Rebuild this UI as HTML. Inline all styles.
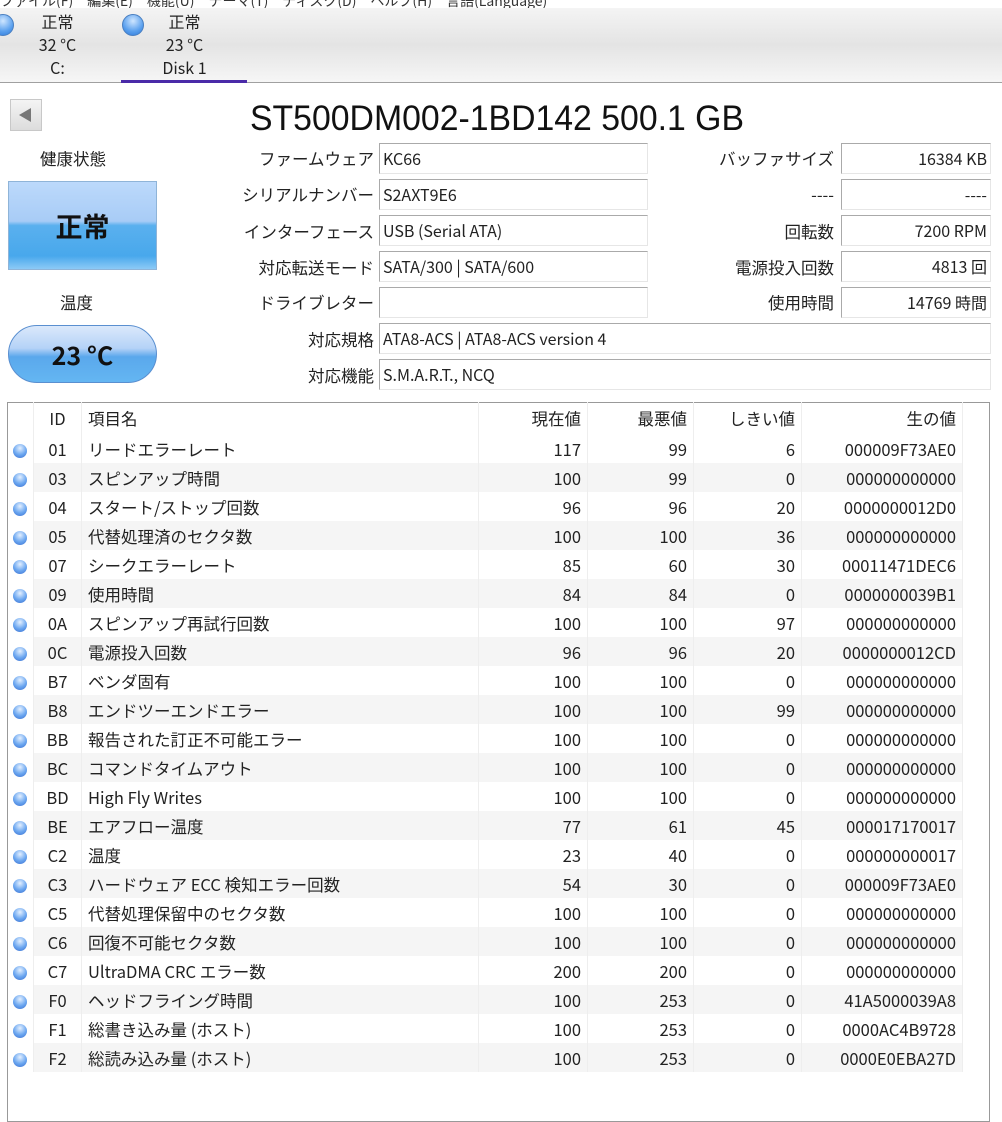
<!DOCTYPE html>
<html><head><meta charset="utf-8">
<style>
*{margin:0;padding:0;box-sizing:border-box}
body{width:1002px;height:1093px;background:#fff;position:relative;overflow:hidden;font-family:"Noto Sans CJK JP","Liberation Sans",sans-serif;font-size:16.5px;color:#222;line-height:22px}
.a{position:absolute;white-space:nowrap}
.menu{top:-10px;left:0;font-size:14px;color:#333}
.tabs{position:absolute;left:0;top:8px;width:1002px;height:75px;background:linear-gradient(#f4f4f4,#e4e4e4 50%,#f6f6f6);border-bottom:1px solid #a0a0a0}
.tab{position:absolute;top:2px;text-align:center;font-size:16px;line-height:23px;color:#222}
.ball{position:absolute;width:22px;height:22px;border-radius:50%;background:radial-gradient(circle at 50% 30%,#cfe6ff,#5aa0ee 60%,#2d78d8);border:1px solid #4a7fc0}
.lbl{text-align:right}
.box{position:absolute;height:31px;border:1px solid #aaa;border-right-color:#e6e6e6;border-bottom-color:#e6e6e6;background:#fff;padding:0 3px;line-height:29px;font-size:16px}
.r{text-align:right}
table{position:absolute;left:7px;top:402px;border-collapse:collapse;font-size:16.5px}
.frame{position:absolute;left:7px;top:402px;width:983px;height:720px;border:1px solid #999}
td{height:29px;padding:0 6px;border-right:1px solid #eee;white-space:nowrap;line-height:20px;vertical-align:middle}
tr.s td:not(:first-child){background:#f5f5f5}
td.n{text-align:right}
.dot{display:inline-block;width:14px;height:14px;border-radius:50%;background:radial-gradient(circle at 50% 30%,#e4f0ff,#6aa6f0 55%,#3a6fd0);vertical-align:middle}
</style></head><body>
<div class="a menu">ファイル(F)　編集(E)　機能(U)　テーマ(T)　ディスク(D)　ヘルプ(H)　言語(Language)</div>
<div class="tabs">
<div class="ball" style="left:-8px;top:6px"></div>
<div class="tab" style="left:20px;width:75px">正常<br>32 °C<br>C:</div>
<div class="ball" style="left:122px;top:6px"></div>
<div class="tab" style="left:147px;width:75px">正常<br>23 °C<br>Disk 1</div>
<div style="position:absolute;left:121px;top:72px;width:126px;height:3px;background:#4a2aa8"></div>
</div>
<div class="a" style="left:10px;top:99px;width:32px;height:32px;background:linear-gradient(#f4f4f4,#dcdcdc);border:1px solid #c8c8c8"><div style="position:absolute;left:8px;top:8px;width:0;height:0;border-top:7px solid transparent;border-bottom:7px solid transparent;border-right:12px solid #777"></div></div>
<svg class="a" style="left:248px;top:95px" width="500" height="45"><text x="2" y="35" font-family="Liberation Sans" font-size="35" fill="#111" textLength="494" lengthAdjust="spacingAndGlyphs">ST500DM002-1BD142 500.1 GB</text></svg>

<div class="a" style="left:40px;top:147px">健康状態</div>
<div class="a" style="left:8px;top:181px;width:149px;height:89px;border:1px solid #8fb4d8;background:linear-gradient(#bcd9fb 0%,#a8ccf6 45%,#5ab0ee 50%,#48a8ec 85%,#8ccaf6 100%);text-align:center;line-height:87px;font-size:27px;font-weight:bold;color:#111">正常</div>
<div class="a" style="left:60px;top:291px">温度</div>
<div class="a" style="left:8px;top:325px;width:149px;height:58px;border-radius:29px;border:1px solid #5a8fd0;background:linear-gradient(#dbe9fb 0%,#b4d2f7 40%,#5aa8ec 55%,#64b6f2 100%);text-align:center;line-height:58px;font-size:25px;font-weight:bold;color:#111">23 °C</div>

<div class="a lbl" style="right:628px;top:147px">ファームウェア</div>
<div class="a lbl" style="right:628px;top:183px">シリアルナンバー</div>
<div class="a lbl" style="right:628px;top:220px">インターフェース</div>
<div class="a lbl" style="right:628px;top:256px">対応転送モード</div>
<div class="a lbl" style="right:628px;top:291px">ドライブレター</div>
<div class="a lbl" style="right:628px;top:328px">対応規格</div>
<div class="a lbl" style="right:628px;top:364px">対応機能</div>
<div class="box" style="left:379px;top:143px;width:269px">KC66</div>
<div class="box" style="left:379px;top:179px;width:269px">S2AXT9E6</div>
<div class="box" style="left:379px;top:215px;width:269px">USB (Serial ATA)</div>
<div class="box" style="left:379px;top:251px;width:269px">SATA/300 | SATA/600</div>
<div class="box" style="left:379px;top:287px;width:269px"></div>
<div class="box" style="left:379px;top:323px;width:612px">ATA8-ACS | ATA8-ACS version 4</div>
<div class="box" style="left:379px;top:359px;width:612px">S.M.A.R.T., NCQ</div>

<div class="a lbl" style="right:168px;top:147px">バッファサイズ</div>
<div class="a lbl" style="right:168px;top:183px">----</div>
<div class="a lbl" style="right:168px;top:220px">回転数</div>
<div class="a lbl" style="right:168px;top:256px">電源投入回数</div>
<div class="a lbl" style="right:168px;top:291px">使用時間</div>
<div class="box r" style="left:841px;top:143px;width:150px">16384 KB</div>
<div class="box r" style="left:841px;top:179px;width:150px">----</div>
<div class="box r" style="left:841px;top:215px;width:150px">7200 RPM</div>
<div class="box r" style="left:841px;top:251px;width:150px">4813 回</div>
<div class="box r" style="left:841px;top:287px;width:150px">14769 時間</div>

<div class="frame"></div>
<table>
<colgroup><col style="width:26px"><col style="width:48px"><col style="width:397px"><col style="width:109px"><col style="width:106px"><col style="width:108px"><col style="width:161px"></colgroup>
<tr style="height:32px"><td></td><td style="text-align:center">ID</td><td>項目名</td><td class="n">現在値</td><td class="n">最悪値</td><td class="n">しきい値</td><td class="n">生の値</td></tr>
<tr><td><span class="dot"></span></td><td style="text-align:center">01</td><td>リードエラーレート</td><td class="n">117</td><td class="n">99</td><td class="n">6</td><td class="n">000009F73AE0</td></tr>
<tr class="s"><td><span class="dot"></span></td><td style="text-align:center">03</td><td>スピンアップ時間</td><td class="n">100</td><td class="n">99</td><td class="n">0</td><td class="n">000000000000</td></tr>
<tr><td><span class="dot"></span></td><td style="text-align:center">04</td><td>スタート/ストップ回数</td><td class="n">96</td><td class="n">96</td><td class="n">20</td><td class="n">0000000012D0</td></tr>
<tr class="s"><td><span class="dot"></span></td><td style="text-align:center">05</td><td>代替処理済のセクタ数</td><td class="n">100</td><td class="n">100</td><td class="n">36</td><td class="n">000000000000</td></tr>
<tr><td><span class="dot"></span></td><td style="text-align:center">07</td><td>シークエラーレート</td><td class="n">85</td><td class="n">60</td><td class="n">30</td><td class="n">00011471DEC6</td></tr>
<tr class="s"><td><span class="dot"></span></td><td style="text-align:center">09</td><td>使用時間</td><td class="n">84</td><td class="n">84</td><td class="n">0</td><td class="n">0000000039B1</td></tr>
<tr><td><span class="dot"></span></td><td style="text-align:center">0A</td><td>スピンアップ再試行回数</td><td class="n">100</td><td class="n">100</td><td class="n">97</td><td class="n">000000000000</td></tr>
<tr class="s"><td><span class="dot"></span></td><td style="text-align:center">0C</td><td>電源投入回数</td><td class="n">96</td><td class="n">96</td><td class="n">20</td><td class="n">0000000012CD</td></tr>
<tr><td><span class="dot"></span></td><td style="text-align:center">B7</td><td>ベンダ固有</td><td class="n">100</td><td class="n">100</td><td class="n">0</td><td class="n">000000000000</td></tr>
<tr class="s"><td><span class="dot"></span></td><td style="text-align:center">B8</td><td>エンドツーエンドエラー</td><td class="n">100</td><td class="n">100</td><td class="n">99</td><td class="n">000000000000</td></tr>
<tr><td><span class="dot"></span></td><td style="text-align:center">BB</td><td>報告された訂正不可能エラー</td><td class="n">100</td><td class="n">100</td><td class="n">0</td><td class="n">000000000000</td></tr>
<tr class="s"><td><span class="dot"></span></td><td style="text-align:center">BC</td><td>コマンドタイムアウト</td><td class="n">100</td><td class="n">100</td><td class="n">0</td><td class="n">000000000000</td></tr>
<tr><td><span class="dot"></span></td><td style="text-align:center">BD</td><td>High Fly Writes</td><td class="n">100</td><td class="n">100</td><td class="n">0</td><td class="n">000000000000</td></tr>
<tr class="s"><td><span class="dot"></span></td><td style="text-align:center">BE</td><td>エアフロー温度</td><td class="n">77</td><td class="n">61</td><td class="n">45</td><td class="n">000017170017</td></tr>
<tr><td><span class="dot"></span></td><td style="text-align:center">C2</td><td>温度</td><td class="n">23</td><td class="n">40</td><td class="n">0</td><td class="n">000000000017</td></tr>
<tr class="s"><td><span class="dot"></span></td><td style="text-align:center">C3</td><td>ハードウェア ECC 検知エラー回数</td><td class="n">54</td><td class="n">30</td><td class="n">0</td><td class="n">000009F73AE0</td></tr>
<tr><td><span class="dot"></span></td><td style="text-align:center">C5</td><td>代替処理保留中のセクタ数</td><td class="n">100</td><td class="n">100</td><td class="n">0</td><td class="n">000000000000</td></tr>
<tr class="s"><td><span class="dot"></span></td><td style="text-align:center">C6</td><td>回復不可能セクタ数</td><td class="n">100</td><td class="n">100</td><td class="n">0</td><td class="n">000000000000</td></tr>
<tr><td><span class="dot"></span></td><td style="text-align:center">C7</td><td>UltraDMA CRC エラー数</td><td class="n">200</td><td class="n">200</td><td class="n">0</td><td class="n">000000000000</td></tr>
<tr class="s"><td><span class="dot"></span></td><td style="text-align:center">F0</td><td>ヘッドフライング時間</td><td class="n">100</td><td class="n">253</td><td class="n">0</td><td class="n">41A5000039A8</td></tr>
<tr><td><span class="dot"></span></td><td style="text-align:center">F1</td><td>総書き込み量 (ホスト)</td><td class="n">100</td><td class="n">253</td><td class="n">0</td><td class="n">0000AC4B9728</td></tr>
<tr class="s"><td><span class="dot"></span></td><td style="text-align:center">F2</td><td>総読み込み量 (ホスト)</td><td class="n">100</td><td class="n">253</td><td class="n">0</td><td class="n">0000E0EBA27D</td></tr>
</table>
</body></html>
